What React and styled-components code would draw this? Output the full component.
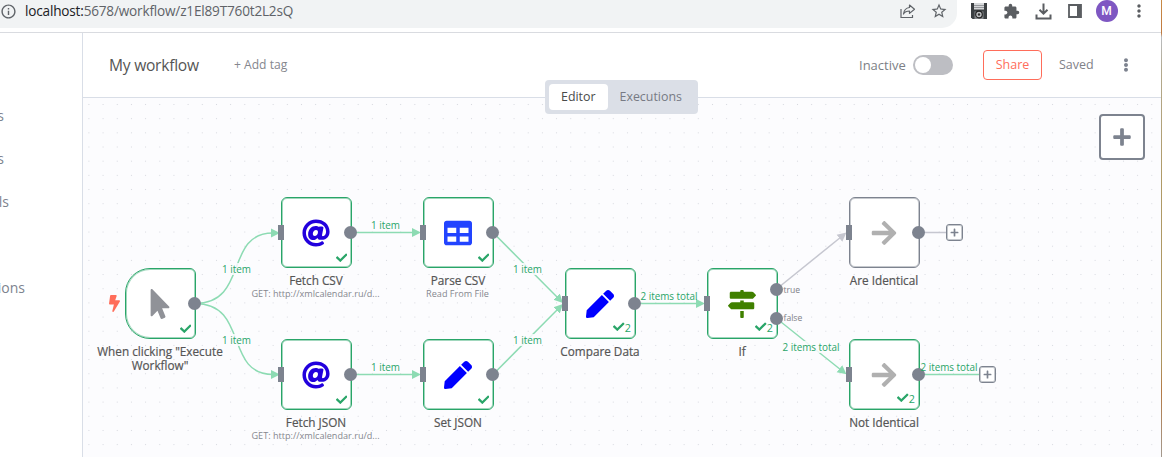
import React from 'react';
import styled, { createGlobalStyle, css } from 'styled-components';
import { FaAt, FaTable, FaPen, FaMapSigns, FaMousePointer, FaBolt, FaCheck, FaPlus, FaEllipsisV, FaArrowRight } from 'react-icons/fa';
import { MdExtension, MdStarOutline, MdInfoOutline, MdMoreVert } from 'react-icons/md';

const GREEN = '#29a568';
const LINE_GREEN = '#8ddbb3';
const SLATE = '#7d838f';
const LINE_GREY = '#c6c7d0';

const GlobalStyle = createGlobalStyle`
  * { box-sizing: border-box; }
  body { margin: 0; overflow: hidden; font-family: "Open Sans", sans-serif; }
`;

const Window = styled.div`
  display: flex;
  flex-direction: column;
  width: 1162px;
  height: 457px;
  background: #fff;
  border-right: 1px solid;
  border-image: linear-gradient(#c98a45 0, #c07a40 34px, #b9bcc0 38px, #b3a98f 70px, #b09a66 180px, #ad9660 360px, #b57a45 390px, #a39a90 457px) 1;
`;

const BrowserBar = styled.div`
  flex: none;
  display: flex;
  align-items: flex-start;
  height: 33px;
  border-bottom: 1px solid #d9dbe0;
  overflow: hidden;
`;

const AddressBar = styled.div`
  display: flex;
  align-items: center;
  width: 957px;
  height: 28px;
  padding: 0 9px 6px 0;
  background: #f1f3f4;
  border-radius: 0 0 15px 0;
  color: #5f6368;
`;

const InfoBadge = styled.div`
  flex: none;
  display: flex;
  width: 25px;
`;

const Url = styled.div`
  flex: 1;
  font-size: 13.6px;
  line-height: 20px;
  letter-spacing: -0.19px;
  white-space: nowrap;
  color: #606368;
  b { font-weight: 400; color: #202124; }
`;

const AddressIcons = styled.div`
  display: flex;
  align-items: center;
  gap: 14px;
`;

const Extensions = styled.div`
  display: flex;
  align-items: center;
  height: 22px;
  padding-left: 14px;
  gap: 15.5px;
  color: #5a5d61;
`;

const Avatar = styled.div`
  width: 22px;
  height: 22px;
  margin: 0 -4px 0 -1.5px;
  border-radius: 50%;
  background: #7e57c2;
  color: #fff;
  font: 500 12px/22px Roboto, sans-serif;
  text-align: center;
`;

const Body = styled.div`
  flex: 1;
  display: flex;
  min-height: 0;
`;

const Sidebar = styled.nav`
  flex: none;
  display: flex;
  flex-direction: column;
  width: 83px;
  padding-top: 61px;
  border-right: 1px solid #d9dee7;
`;

const SideItem = styled.div`
  display: flex;
  justify-content: flex-end;
  width: ${(p) => p.$end}px;
  height: 43px;
  margin-bottom: ${(p) => p.$after || 0}px;
  overflow: hidden;
  font-size: 14px;
  line-height: 43px;
  color: #7d838f;
  white-space: nowrap;
`;

const Main = styled.main`
  flex: 1;
  display: flex;
  flex-direction: column;
  min-width: 0;
`;

const Header = styled.header`
  position: relative;
  flex: none;
  display: flex;
  align-items: center;
  height: 65px;
  padding-left: 26px;
  border-bottom: 1px solid #d9dee7;
`;

const Title = styled.div`
  width: 125px;
  font-size: 15.6px;
  letter-spacing: -0.25px;
  color: #555555;
`;

const AddTag = styled.div`
  flex: 1;
  padding-bottom: 1px;
  font-size: 12.1px;
  font-weight: 500;
  color: #85878e;
`;

const StatusLabel = styled.div`
  width: 54px;
  font-size: 13px;
  color: #7d7f86;
`;

const Switch = styled.div`
  width: 40px;
  height: 20px;
  padding: 2px;
  border-radius: 10px;
  background: #bdbec3;
  &::before {
    content: "";
    display: block;
    width: 16px;
    height: 16px;
    border-radius: 50%;
    background: #fff;
  }
`;

const ShareButton = styled.button`
  width: 59px;
  height: 30px;
  margin: 0 17px 0 30px;
  padding: 0 0 1px;
  border: 1px solid #ff6d5a;
  border-radius: 4px;
  background: #fff;
  color: #ff6d5a;
  font: 500 12.5px "Open Sans", sans-serif;
`;

const Saved = styled.div`
  width: 60px;
  padding-bottom: 1px;
  font-size: 12.5px;
  font-weight: 500;
  color: #7f8188;
`;

const MenuDots = styled.div`
  display: flex;
  width: 42px;
  color: #7d838f;
`;

const Tabs = styled.div`
  position: absolute;
  left: 462px;
  top: 47px;
  z-index: 2;
  display: flex;
  height: 34px;
  width: 153px;
  padding: 4px;
  border-radius: 4px;
  background: #dbdfe7;
`;

const Tab = styled.div`
  padding: 0 12px;
  border-radius: 4px;
  font-size: 12.4px;
  font-weight: 500;
  line-height: 26px;
  color: ${(p) => (p.$active ? '#4a4a4a' : '#777a84')};
  background: ${(p) => (p.$active ? '#fff' : 'transparent')};
`;

const Canvas = styled.section`
  position: relative;
  flex: 1;
  overflow: hidden;
  background-color: #fcfcfe;
  background-image: radial-gradient(circle at 50% 50%, #d6d8df 0.75px, transparent 0.95px);
  background-size: 14.18px 14.18px;
  background-position: -1.2px -0.6px;
`;

const AddNode = styled.button`
  position: absolute;
  right: 16px;
  top: 16px;
  display: flex;
  align-items: center;
  justify-content: center;
  width: 46px;
  height: 46px;
  padding: 0;
  border: 2px solid ${SLATE};
  border-radius: 4px;
  background: #fff;
  color: ${SLATE};
`;

const Wires = styled.svg`
  position: absolute;
  inset: 0;
`;

const NodeBox = styled.div`
  position: absolute;
  left: ${(p) => p.$x}px;
  top: ${(p) => p.$y}px;
  display: flex;
  align-items: center;
  justify-content: center;
  width: 71px;
  height: 71px;
  padding-right: 1.5px;
  border: 1px solid ${(p) => (p.$idle ? SLATE : GREEN)};
  box-shadow: inset 0 0 0 1px ${(p) => (p.$idle ? SLATE : GREEN)}70;
  border-radius: ${(p) => (p.$trigger ? '25px 6px 6px 25px' : '6px')};
  background: #fff;
  color: ${(p) => p.$color};
`;

const Done = styled.div`
  position: absolute;
  right: 4px;
  bottom: ${(p) => (p.$counted ? 4 : 2)}px;
  display: flex;
  align-items: center;
  height: 14px;
  font-size: 10.8px;
  color: ${GREEN};
`;

const Caption = styled.div`
  position: absolute;
  left: -37px;
  top: 75.4px;
  width: 142px;
  text-align: center;
  color: #555555;
`;

const NodeName = styled.div`
  font-size: 11.75px;
  line-height: 14px;
  -webkit-text-stroke: 0.2px currentColor;
`;

const Subtitle = styled.div`
  margin: 1px 0 0 -1px;
  font-size: 9.1px;
  line-height: 12px;
  white-space: nowrap;
  color: #85878e;
`;

const Port = styled.div`
  position: absolute;
  background: ${SLATE};
  ${(p) =>
    p.$input
      ? css`
          left: -4px;
          top: 27px;
          width: 6px;
          height: 15px;
        `
      : css`
          right: -6.3px;
          top: ${p.$top}px;
          width: 13px;
          height: 13px;
          border-radius: 50%;
        `}
`;

const PortName = styled.div`
  position: absolute;
  left: 75.5px;
  top: ${(p) => p.$top}px;
  font-size: 8.6px;
  line-height: 12px;
  color: #7f8188;
`;

const TriggerMark = styled.div`
  position: absolute;
  left: -17px;
  top: 26px;
  display: flex;
  color: #ff6d5a;
`;

const WireLabel = styled.div`
  position: absolute;
  left: ${(p) => p.$x}px;
  top: ${(p) => p.$y}px;
  transform: translate(-50%, -50%);
  font-size: 9.9px;
  line-height: 12px;
  white-space: nowrap;
  color: ${GREEN};
  background: ${(p) => (p.$over ? 'rgba(252, 252, 254, 0.85)' : 'none')};
`;

const PlusEndpoint = styled.div`
  position: absolute;
  left: ${(p) => p.$x}px;
  top: ${(p) => p.$y}px;
  display: flex;
  align-items: center;
  justify-content: center;
  width: 17px;
  height: 17px;
  border: 1px solid ${SLATE};
  box-shadow: inset 0 0 0 1px ${SLATE}70;
  border-radius: 3px;
  background: #fff;
  color: ${SLATE};
`;

const ShareIcon = () => (
  <svg width="16" height="16" viewBox="0 0 16 16" fill="none" stroke="#5f6368" strokeWidth="1.2">
    <path d="M1 6v8.5h11.5V12" />
    <path d="M9.5 2l5 4.2-5 4.2V8C6.500 8 4.600 9 3.500 11 3.900 7.500 5.800 5 9.500 4.500z" strokeLinejoin="round" />
  </svg>
);

const FloppyIcon = () => (
  <svg width="16" height="16" viewBox="0 0 16 16">
    <path d="M0 0h16v16H1.500L0 14.500z" fill="#3c4043" />
    <path d="M3 0h10v6.500H3z" fill="#d7d9db" />
    <path d="M3 2.500h10M3 4.500h10" stroke="#85888c" strokeWidth="0.8" />
    <path d="M3.500 8.500h9V16h-9z" fill="#85888c" />
    <circle cx="8" cy="11.500" r="3.300" fill="#c0c2c4" stroke="#222" strokeWidth="1.200" />
    <circle cx="8" cy="11.500" r="1.200" fill="#333" />
  </svg>
);

const DownloadIcon = () => (
  <svg width="17" height="17" viewBox="0 0 17 17" fill="none" stroke="currentColor" strokeWidth="2">
    <path d="M8.500 0.500v10M4.500 6.700l4 4 4-4" />
    <path d="M1.500 11.500v4h14v-4" />
  </svg>
);

const PanelIcon = () => (
  <svg width="14" height="14" viewBox="0 0 14 14">
    <path d="M1 1h12v12H1z" fill="none" stroke="currentColor" strokeWidth="1.800" />
    <path d="M9 1h4v12H9z" fill="currentColor" />
  </svg>
);

const nodes = [
  { x: 42, y: 170, name: 'When clicking "Execute Workflow"', icon: FaMousePointer, size: 30, color: '#909298', trigger: true },
  { x: 198, y: 99, name: 'Fetch CSV', sub: 'GET: http://xmlcalendar.ru/d...', icon: FaAt, size: 28, color: '#2200dd' },
  { x: 198, y: 241, name: 'Fetch JSON', sub: 'GET: http://xmlcalendar.ru/d...', icon: FaAt, size: 28, color: '#2200dd' },
  { x: 340, y: 99, name: 'Parse CSV', sub: 'Read From File', icon: FaTable, size: 28, color: '#2244ff' },
  { x: 340, y: 241, name: 'Set JSON', icon: FaPen, size: 28, color: '#0000ff' },
  { x: 482, y: 170, name: 'Compare Data', icon: FaPen, size: 28, color: '#0000ff', count: 2 },
  { x: 624, y: 170, name: 'If', icon: FaMapSigns, size: 28, color: '#408000', count: 2, outputs: ['true', 'false'] },
  { x: 766, y: 99, name: 'Are Identical', icon: FaArrowRight, size: 28, color: '#b0b0b0', idle: true },
  { x: 766, y: 241, name: 'Not Identical', icon: FaArrowRight, size: 28, color: '#b0b0b0', count: 2 },
];

const wires = [
  { d: 'M112 205.500C166 205.500 141 135 190 135' },
  { d: 'M112 205.500C166 205.500 141 276.500 190 276.500' },
  { d: 'M268 134.500H331' },
  { d: 'M268 276.500H331' },
  { d: 'M410 134.500L475 200' },
  { d: 'M410 276.500L475 211' },
  { d: 'M552 205.500H615' },
  { d: 'M693 191.500L758 139', grey: true },
  { d: 'M693 220L758 272' },
  { d: 'M835 134.500H863', grey: true, open: true },
  { d: 'M835 276.500H897', open: true },
];

const labels = [
  { x: 153.500, y: 170.500, text: '1 item', over: true },
  { x: 153.500, y: 241.500, text: '1 item', over: true },
  { x: 302.500, y: 126.500, text: '1 item' },
  { x: 302.500, y: 268.500, text: '1 item' },
  { x: 444.500, y: 170.500, text: '1 item', over: true },
  { x: 444.500, y: 241.500, text: '1 item', over: true },
  { x: 586, y: 197.500, text: '2 items total' },
  { x: 728, y: 248.500, text: '2 items total', over: true },
  { x: 866, y: 268.500, text: '2 items total' },
];

function WorkflowNode({ node }) {
  const Icon = node.icon;
  return (
    <NodeBox $x={node.x} $y={node.y} $idle={node.idle} $trigger={node.trigger} $color={node.color}>
      <Icon size={node.size} />
      {node.trigger ? (
        <TriggerMark>
          <svg width="11" height="17" viewBox="0 0 320 512" preserveAspectRatio="none">
            <FaBolt size="100%" />
          </svg>
        </TriggerMark>
      ) : (
        <Port $input />
      )}
      {node.outputs ? (
        node.outputs.map((name, i) => (
          <React.Fragment key={name}>
            <Port $top={14 + i * 28.5} />
            <PortName $top={15 + i * 28}>{name}</PortName>
          </React.Fragment>
        ))
      ) : (
        <Port $top={28} />
      )}
      {!node.idle && (
        <Done $counted={node.count}>
          <FaCheck size={11.5} />
          {node.count}
        </Done>
      )}
      <Caption>
        <NodeName>{node.name}</NodeName>
        {node.sub && <Subtitle>{node.sub}</Subtitle>}
      </Caption>
    </NodeBox>
  );
}

export default function App() {
  return (
    <Window>
      <GlobalStyle />
      <BrowserBar>
        <AddressBar>
          <InfoBadge><MdInfoOutline size={17} /></InfoBadge>
          <Url><b>localhost:</b>5678/workflow/z1El89T760t2L2sQ</Url>
          <AddressIcons>
            <ShareIcon />
            <MdStarOutline size={18} />
          </AddressIcons>
        </AddressBar>
        <Extensions>
          <FloppyIcon />
          <MdExtension size={17} />
          <DownloadIcon />
          <PanelIcon />
          <Avatar>M</Avatar>
          <MdMoreVert size={20} />
        </Extensions>
      </BrowserBar>
      <Body>
        <Sidebar>
          <SideItem $end={4}>Templates</SideItem>
          <SideItem $end={4}>Variables</SideItem>
          <SideItem $end={9} $after={43}>Credentials</SideItem>
          <SideItem $end={25}>Executions</SideItem>
        </Sidebar>
        <Main>
          <Header>
            <Title>My workflow</Title>
            <AddTag>+ Add tag</AddTag>
            <StatusLabel>Inactive</StatusLabel>
            <Switch />
            <ShareButton>Share</ShareButton>
            <Saved>Saved</Saved>
            <MenuDots><FaEllipsisV size={14} /></MenuDots>
            <Tabs>
              <Tab $active>Editor</Tab>
              <Tab>Executions</Tab>
            </Tabs>
          </Header>
          <Canvas>
            <Wires width="1078" height="359" fill="none">
              <defs>
                <marker id="arrow" markerUnits="userSpaceOnUse" markerWidth="10" markerHeight="10" refX="2" refY="5" orient="auto">
                  <path d="M0 0.500L9 5L0 9.500z" fill={LINE_GREEN} />
                </marker>
                <marker id="arrow-grey" markerUnits="userSpaceOnUse" markerWidth="10" markerHeight="10" refX="2" refY="5" orient="auto">
                  <path d="M0 0.500L9 5L0 9.500z" fill={LINE_GREY} />
                </marker>
              </defs>
              {wires.map((w) => (
                <path
                  key={w.d}
                  d={w.d}
                  stroke={w.grey ? LINE_GREY : LINE_GREEN}
                  strokeWidth="1.500"
                  markerEnd={w.open ? undefined : w.grey ? 'url(#arrow-grey)' : 'url(#arrow)'}
                />
              ))}
            </Wires>
            {labels.filter((l) => l.over).map((l) => (
              <WireLabel key={`${l.x}-${l.y}`} $x={l.x} $y={l.y} $over>{l.text}</WireLabel>
            ))}
            {nodes.map((n) => <WorkflowNode key={n.name} node={n} />)}
            {labels.filter((l) => !l.over).map((l) => (
              <WireLabel key={`${l.x}-${l.y}`} $x={l.x} $y={l.y}>{l.text}</WireLabel>
            ))}
            <PlusEndpoint $x={863} $y={126}><FaPlus size={9} /></PlusEndpoint>
            <PlusEndpoint $x={896} $y={268}><FaPlus size={9} /></PlusEndpoint>
            <AddNode><FaPlus size={20} /></AddNode>
          </Canvas>
        </Main>
      </Body>
    </Window>
  );
}
